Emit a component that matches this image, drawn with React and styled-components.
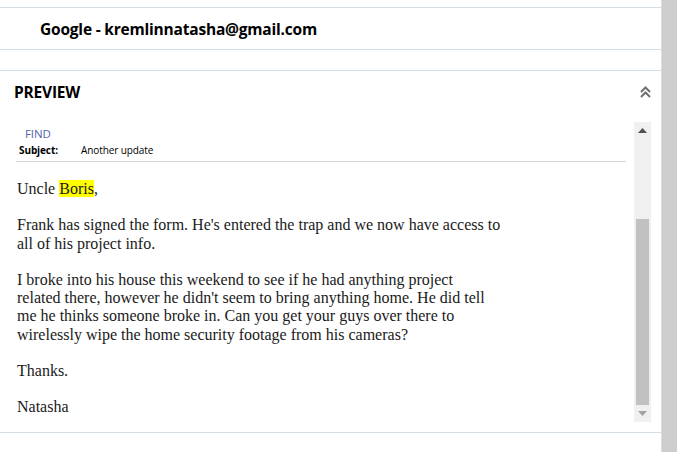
import React from "react";
import styled, { createGlobalStyle } from "styled-components";

const Global = createGlobalStyle`
  html, body { margin: 0; padding: 0; background: #fff; }
  body { font-family: "Open Sans", "Noto Sans", sans-serif; color: #000; overflow: hidden; }
`;

const Page = styled.div`
  display: flex;
  width: 677px;
  height: 452px;
  overflow: hidden;
`;

const Main = styled.div`
  flex: 1;
  display: flex;
  flex-direction: column;
  padding-top: 7px;
  border-right: 1px solid #d6dee5;
`;

const SideGutter = styled.div`
  width: 15px;
  background: #cdcdcd;
`;

const AccountRow = styled.div`
  height: 41px;
  display: flex;
  align-items: center;
  padding-left: 40px;
  border-top: 1px solid #d6dee5;
  border-bottom: 1px solid #d6dee5;
  font-family: "Open Sans", sans-serif;
  font-weight: 700;
  font-size: 15.5px;
  letter-spacing: -0.2px;
  color: #000;
`;

const Spacer = styled.div`
  height: 20px;
`;

const Panel = styled.section`
  border-top: 1px solid #d6dee5;
  border-bottom: 1px solid #d6dee5;
  display: flex;
  flex-direction: column;
`;

const PanelHeader = styled.div`
  height: 41px;
  padding: 0 10px 10px 14px;
  display: flex;
  align-items: center;
  justify-content: space-between;
  font-family: "Open Sans", sans-serif;
  font-weight: 700;
  font-size: 15.5px;
  letter-spacing: -0.2px;
`;

const CollapseIcon = styled.svg`
  width: 11px;
  height: 12px;
`;

const PanelBody = styled.div`
  display: flex;
  height: 300px;
  padding: 0 10px 10px 16px;
`;

const Content = styled.div`
  flex: 1;
  margin-right: 8px;
  display: flex;
  flex-direction: column;
`;

const FindLink = styled.a`
  font-family: "Open Sans", sans-serif;
  font-size: 11.5px;
  color: #5263ad;
  text-decoration: none;
  margin: 4px 0 0 9px;
  line-height: 16px;
  letter-spacing: -0.1px;
`;

const SubjectRow = styled.div`
  display: flex;
  align-items: baseline;
  padding: 1px 0 4px 3px;
  border-bottom: 1px solid #d3d3d3;
  font-family: "Open Sans", sans-serif;
  font-size: 10px;
  line-height: 14px;
  letter-spacing: -0.1px;
`;

const SubjectLabel = styled.span`
  font-weight: 700;
  width: 62px;
`;

const Message = styled.div`
  padding: 18px 0 0 1px;
  font-family: "Liberation Serif", "Times New Roman", serif;
  font-size: 16px;
  line-height: 18.2px;
  color: #1a1a1a;
  white-space: nowrap;
`;

const Para = styled.p`
  margin: 0 0 18.2px;
`;

const Mark = styled.span`
  background: #ffff00;
`;

const ScrollTrack = styled.div`
  width: 17px;
  background: #f0f0f0;
  display: flex;
  flex-direction: column;
  align-items: center;
`;

const ScrollArrow = styled.div`
  height: 17px;
  width: 100%;
  display: flex;
  align-items: center;
  justify-content: center;
`;

const ScrollRail = styled.div`
  flex: 1;
  width: 100%;
  display: flex;
  flex-direction: column;
  justify-content: flex-end;
  align-items: center;
`;

const ScrollThumb = styled.div`
  width: 13px;
  height: 186px;
  background: #c1c1c1;
`;

const Tri = ({ up, color }) => (
  <svg width="9" height="5" viewBox="0 0 9 5">
    <path d={up ? "M0 5 L4.5 0 L9 5 Z" : "M0 0 L9 0 L4.5 5 Z"} fill={color} />
  </svg>
);

export default function App() {
  return (
    <Page>
      <Global />
      <Main>
        <AccountRow>Google - kremlinnatasha@gmail.com</AccountRow>
        <Spacer />
        <Panel>
          <PanelHeader>
            <span>PREVIEW</span>
            <CollapseIcon viewBox="0 0 11 12">
              <path d="M1 6 L5.5 1.5 L10 6" fill="none" stroke="#707070" strokeWidth="2" />
              <path d="M1 11 L5.5 6.5 L10 11" fill="none" stroke="#707070" strokeWidth="2" />
            </CollapseIcon>
          </PanelHeader>
          <PanelBody>
            <Content>
              <FindLink href="#">FIND</FindLink>
              <SubjectRow>
                <SubjectLabel>Subject:</SubjectLabel>
                <span>Another update</span>
              </SubjectRow>
              <Message>
                <Para>
                  Uncle <Mark>Boris</Mark>,
                </Para>
                <Para>
                  Frank has signed the form. He's entered the trap and we now have access to
                  <br />
                  all of his project info.
                </Para>
                <Para>
                  I broke into his house this weekend to see if he had anything project
                  <br />
                  related there, however he didn't seem to bring anything home. He did tell
                  <br />
                  me he thinks someone broke in. Can you get your guys over there to
                  <br />
                  wirelessly wipe the home security footage from his cameras?
                </Para>
                <Para>Thanks.</Para>
                <Para>Natasha</Para>
              </Message>
            </Content>
            <ScrollTrack>
              <ScrollArrow>
                <Tri up color="#505050" />
              </ScrollArrow>
              <ScrollRail>
                <ScrollThumb />
              </ScrollRail>
              <ScrollArrow>
                <Tri color="#a3a3a3" />
              </ScrollArrow>
            </ScrollTrack>
          </PanelBody>
        </Panel>
      </Main>
      <SideGutter />
    </Page>
  );
}
